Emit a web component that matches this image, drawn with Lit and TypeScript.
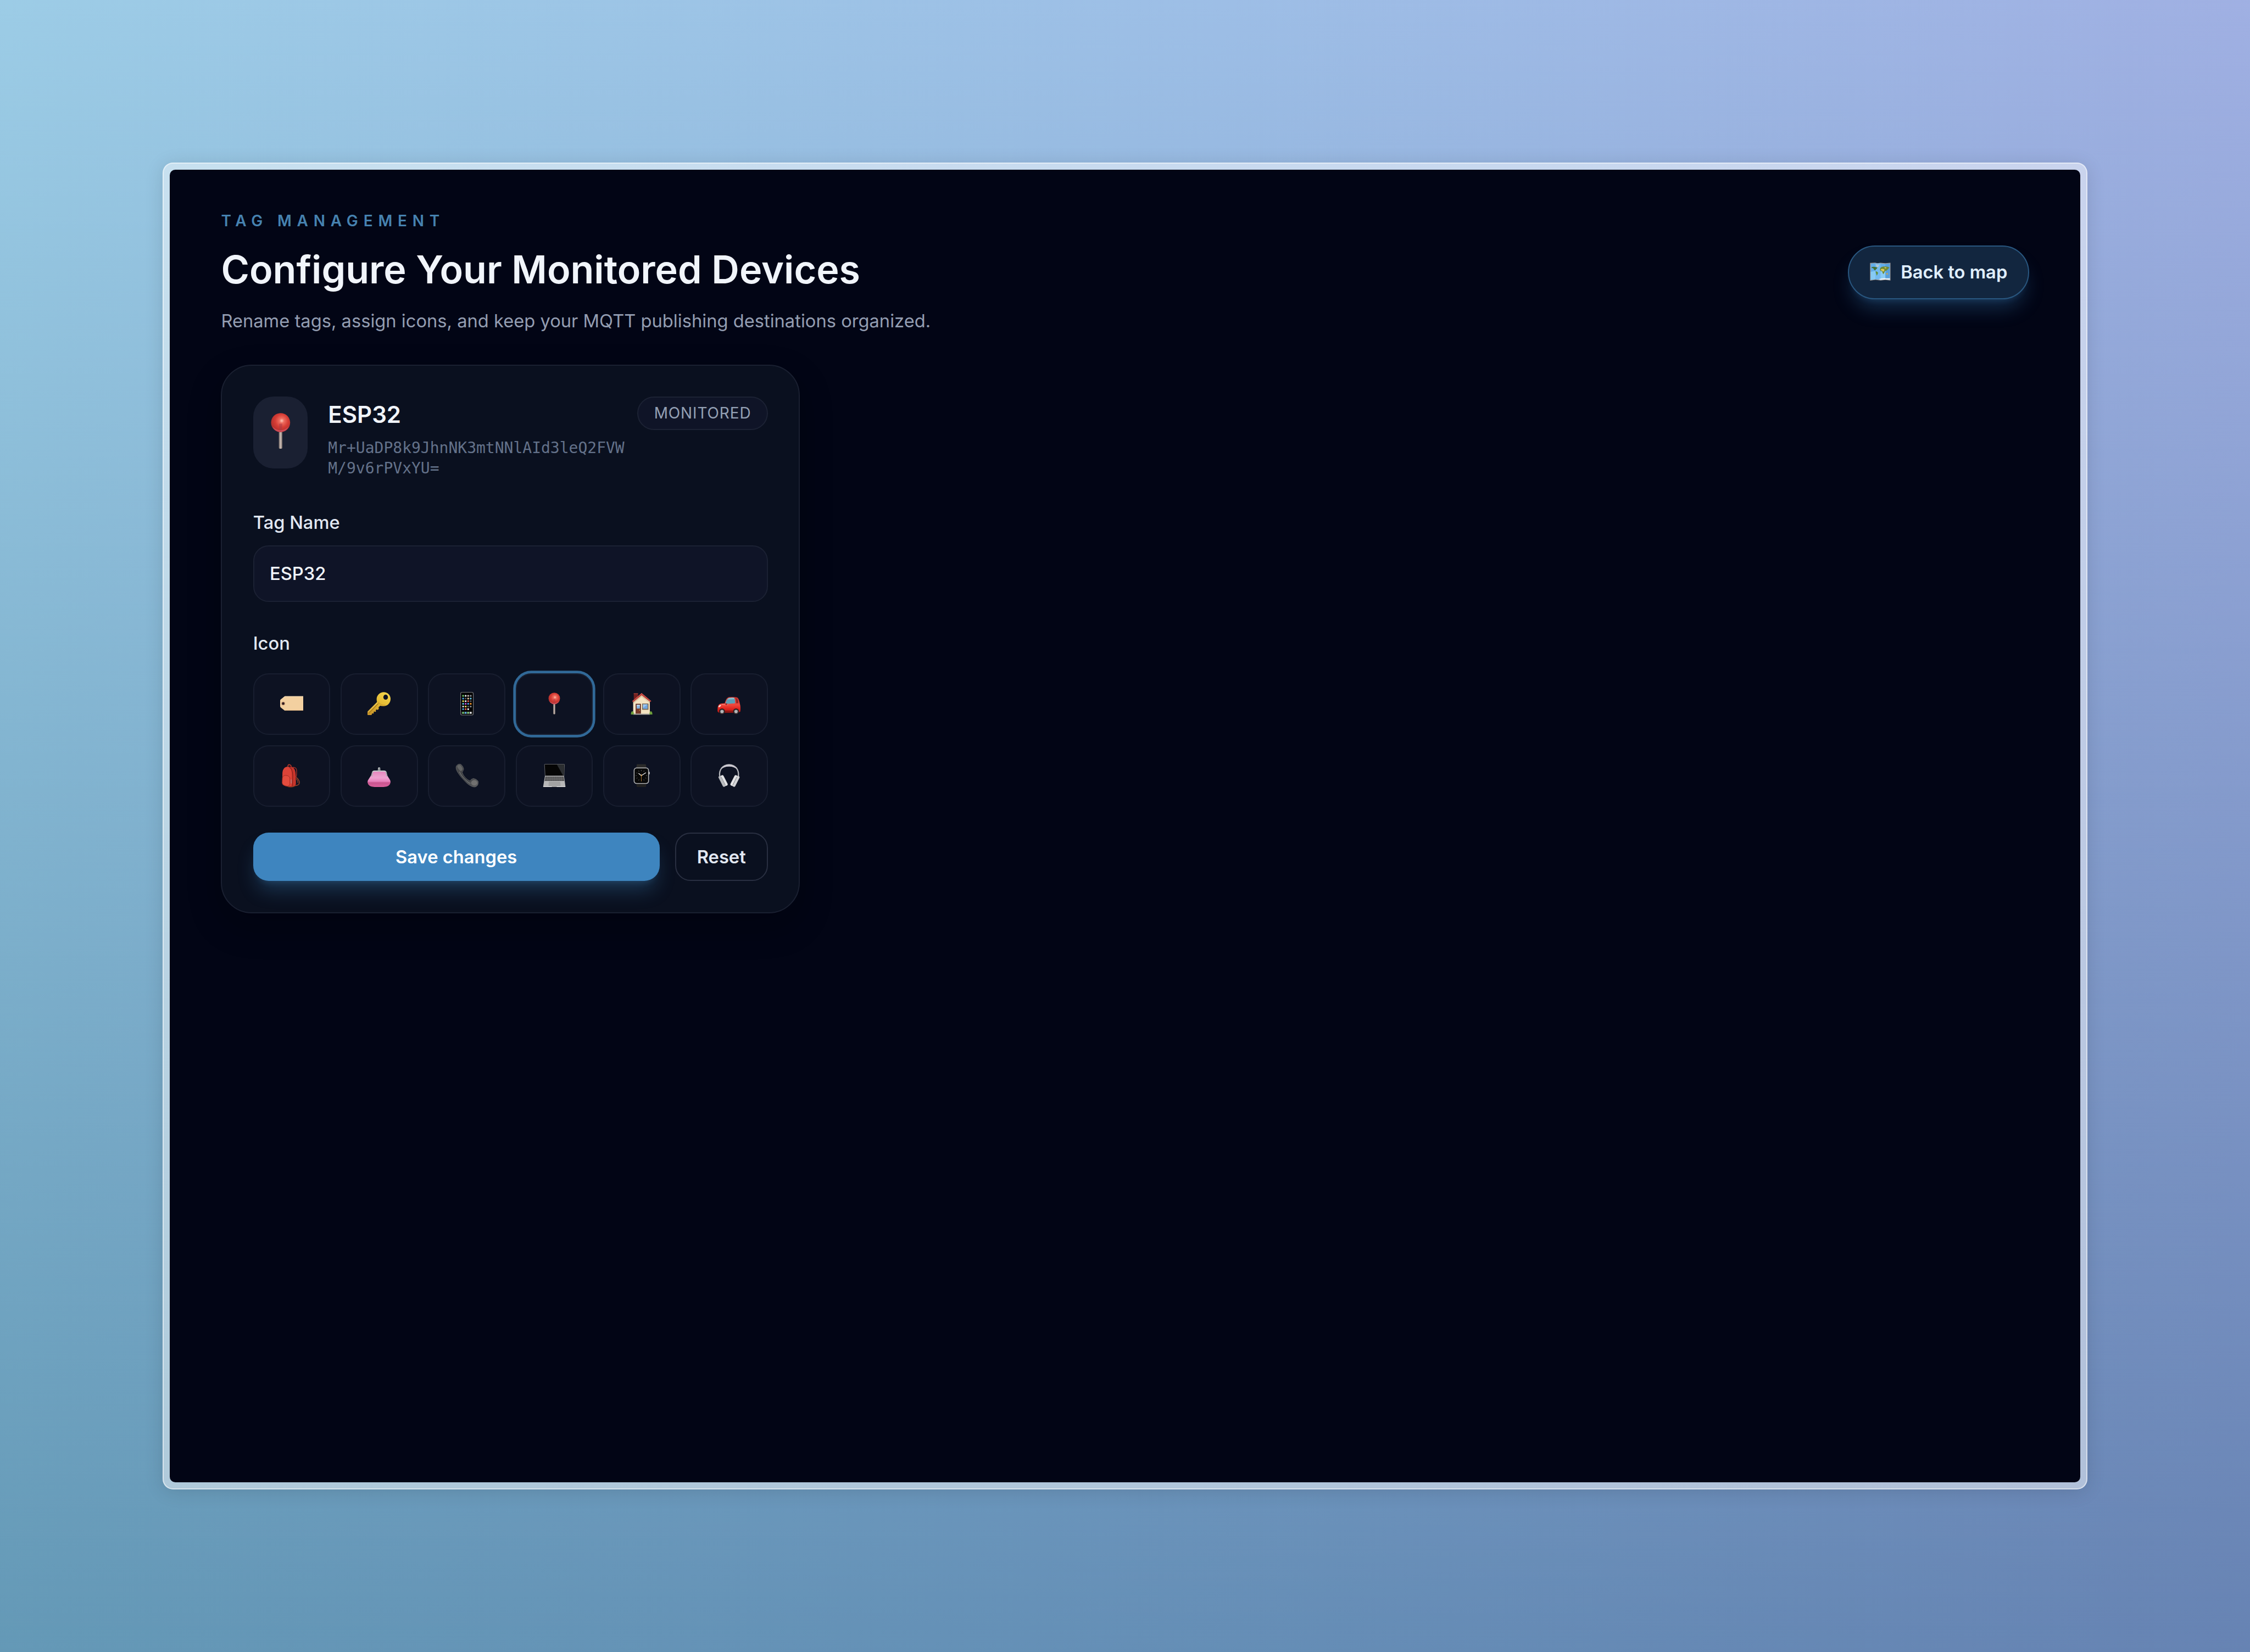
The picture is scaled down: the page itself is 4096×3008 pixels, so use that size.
import { LitElement, html, svg, css, unsafeCSS } from "lit";
import { customElement, property, state } from "lit/decorators.js";
import { classMap } from "lit/directives/class-map.js";

const px = (n: number) => unsafeCSS((n * 2.3345).toFixed(3) + "px");

const pin = svg`
  <defs>
    <radialGradient id="pinHead" cx="0.56" cy="0.4" r="0.62">
      <stop offset="0" stop-color="#ffc9b8"/><stop offset="0.2" stop-color="#ee6c5e"/>
      <stop offset="0.55" stop-color="#d63c35"/><stop offset="1" stop-color="#ab2e2b"/>
    </radialGradient>
    <linearGradient id="pinStem" x1="0" x2="1" y1="0" y2="0">
      <stop offset="0" stop-color="#6d6461"/><stop offset="0.5" stop-color="#d3c3bb"/><stop offset="1" stop-color="#6d6461"/>
    </linearGradient>
  </defs>
  <rect x="23.6" y="25" width="4.8" height="25" rx="1.4" fill="url(#pinStem)"/>
  <ellipse cx="26" cy="14.6" rx="13" ry="13" fill="url(#pinHead)"/>
  <path d="M24 16 L28.4 16 L27.6 26 H24.6 Z" fill="#a53a45" opacity="0.5"/>
  <path d="M15 20 Q18 27 26 27.4 Q34 27 37 20 Q32 25 26 25 Q20 25 15 20Z" fill="#e0607a" opacity="0.55"/>`;

const label = svg`
  <path d="M10.5 9.5 H52 V42 H10.5 L1 34.5 Q0 33.5 0 32 V19.5 Q0 18 1 17Z" fill="#f3d0a0"/>
  <path d="M10.5 9.5 H52 V10.8 H10.8 L1 18 Z" fill="#f9dfb8"/>
  <path d="M10.5 42 H52 V40.9 H11 Z" fill="#c9a274"/>
  <circle cx="6.9" cy="26" r="4.1" fill="#b98e70"/><circle cx="6.9" cy="26" r="2.8" fill="#2c1a1c"/>`;

const key = svg`
  <defs><linearGradient id="keyGold" x1="0.8" y1="0" x2="0.2" y2="1">
    <stop offset="0" stop-color="#f2d34a"/><stop offset="0.5" stop-color="#e3b832"/><stop offset="1" stop-color="#c9952a"/>
  </linearGradient></defs>
  <path d="M36.5 0.3 C45.5 0.3 52 7 52 15.5 C52 25 45 32 36 32 Q31 32 28.5 31 L24.8 34.5 Q26.3 37 24.5 39.3 Q22.5 41 20 39.2 L18.6 41.2 Q20 43.5 17.8 45 L14.8 44 L13.8 46 Q15.2 48 13 48.6 L10.6 48.4 L9 52 H1 Q0 52 0 50.5 V44.8 Q0 44 1 43 L21.5 22.5 Q20.5 19.5 20.6 15.5 C21 7 28 0.3 36.5 0.3Z M40.9 6 A5.2 5.7 0 1 0 40.9 17.4 A5.2 5.7 0 1 0 40.9 6Z" fill="url(#keyGold)" fill-rule="evenodd"/>
  <path d="M3 48 L24.5 26" stroke="#a67a1d" stroke-width="1.6" fill="none"/>
  <path d="M1.4 45 L22.5 24" stroke="#f7de76" stroke-width="1.2" fill="none"/>
  <path d="M24 23 Q30 30.5 40 29.5" stroke="#c4952a" stroke-width="1.4" fill="none" opacity="0.8"/>`;

const phoneDots: [number, string][] = [
  [0, "#6fce6a"], [1, "#e9e9ee"], [2, "#c9b5ae"], [3, "#8d9096"],
  [4, "#4aa8e6"], [5, "#55585c"], [6, "#e5c3a0"], [7, "#69c9e9"],
  [8, "#e6dc5b"], [9, "#f1f1f1"], [10, "#e05a54"], [11, "#5b5b60"],
  [12, "#57cbe0"], [13, "#c94fdc"], [14, "#4d9fe8"], [15, "#ec9331"],
  [16, "#d9d9dc"], [17, "#e7d957"], [18, "#54565a"], [19, "#85898f"],
  [20, "#49a6e8"], [21, "#e4574e"], [22, "#eeeeee"],
];
const mobile = svg`
  <rect x="11.8" y="0.6" width="28.6" height="51.4" rx="3.4" fill="#050505" stroke="#77787c" stroke-width="1.4"/>
  <rect x="14.2" y="5" width="24" height="44.5" fill="#000"/>
  ${phoneDots.map(([i, c]) => svg`<rect x=${15.6 + (i % 4) * 5.7} y=${6.9 + Math.floor(i / 4) * 6} width="3.7" height="3.7" rx="0.8" fill=${c}/>`)}
  <rect x="14" y="44.3" width="24.2" height="5.2" rx="0.6" fill="#4a4d52" opacity="0.7"/>
  ${["#6fd06a", "#58b4ec", "#7fd67a", "#f3f3f3"].map((c, i) => svg`<rect x=${15.5 + i * 5.7} y="44.9" width="3.8" height="4" rx="0.8" fill=${c}/>`)}`;

const house = svg`
  <rect x="8.3" y="2.8" width="9.6" height="14" fill="#74201f"/><rect x="8.3" y="2.8" width="9.6" height="2.2" fill="#8f3733"/>
  <path d="M7 21 L26 5 L44.6 21 V50 H7Z" fill="#f3e3c2"/>
  <path d="M26 8 L44.6 23 V25 L26 11 L7 26 V23Z" fill="#c9ae86" opacity="0.6"/>
  <path d="M26 2.6 L47.6 20.4 L45.6 22.6 L26 7.4 L7 23 L4.8 20.6Z" fill="#b83a35"/>
  <path d="M26 2.6 L47.6 20.4 L46.8 21.2 L26 4.4 L5.6 21.4 L4.8 20.6Z" fill="#d25a50"/>
  <rect x="12.6" y="26.6" width="11.8" height="22.6" fill="#5a2a1f"/><rect x="14" y="28" width="9" height="21" fill="#7b3b2a"/>
  <rect x="14.8" y="29" width="7.4" height="8.4" fill="#7fb1de"/><rect x="14.8" y="29" width="7.4" height="3" fill="#bcd7ef"/>
  <circle cx="21.4" cy="41" r="1" fill="#e0b74e"/>
  <rect x="27.2" y="26" width="14.2" height="14" fill="#76634d"/><rect x="29" y="27.8" width="10.6" height="10.2" fill="#6fa6e0"/>
  <path d="M29 27.8 H39.6 L29 36Z" fill="#9cc6ee"/>
  <rect x="7" y="48.8" width="37.6" height="2.4" fill="#a9a7a4"/>
  <path d="M2 50.8 Q1.6 44 5.4 43.4 Q8.6 44.2 8.6 50.8Z" fill="#6f9f3c"/>
  <path d="M43.6 50.8 Q43.4 43.6 47 43.4 Q50.6 44.4 50.2 50.8Z" fill="#6f9f3c"/>`;

const car = svg`
  <defs><linearGradient id="carBody" x1="0" y1="0" x2="0" y2="1">
    <stop offset="0" stop-color="#c5302b"/><stop offset="0.5" stop-color="#f0483d"/><stop offset="0.75" stop-color="#e0261f"/><stop offset="1" stop-color="#a81a18"/>
  </linearGradient></defs>
  <path d="M0.6 36 Q1 27 9 26 L16.6 25.4 Q20 12.4 26 11.4 Q35 10.4 43.6 12 Q47.6 13 49.6 22 L51.6 31 Q52.4 38 51.6 44.4 L47 46.4 H3 Q0 46 0.2 42Z" fill="url(#carBody)"/>
  <path d="M18.4 25.8 Q21 15.4 25.8 13.4 Q33 12.2 38 13 Q40 18 39.8 25 Q28 27.4 18.4 25.8Z" fill="#8cc3d2"/>
  <path d="M18.4 25.8 Q19.6 20 22.2 16.6 L38.8 16 Q40 20 39.8 25 Q28 27.4 18.4 25.8Z" fill="#5b9fb6"/>
  <path d="M43 14.6 Q46.4 17 47 25 L42.4 25.4 Q42.8 20 41.4 13.8Z" fill="#8f2423"/>
  <path d="M2.4 33 Q4 28.4 8.6 29 Q7 33.8 3 34.4Z" fill="#f6e6e0"/>
  <path d="M10 27.6 Q18 29.6 24 28.4" stroke="#ff9186" stroke-width="1.3" fill="none"/>
  <ellipse cx="20" cy="27.6" rx="2.3" ry="1.8" fill="#a01e1c"/>
  <path d="M17 42 H35.6 V46.6 H17Z" fill="#8f1512"/>
  <circle cx="10.4" cy="43.6" r="6.6" fill="#2a1616"/><circle cx="10.4" cy="44" r="4.8" fill="#66686c"/><circle cx="10.4" cy="44" r="3" fill="#d9dadc"/><circle cx="10.4" cy="44" r="1" fill="#555"/>
  <circle cx="42" cy="43.6" r="6.6" fill="#2a1616"/><circle cx="42" cy="44" r="4.8" fill="#66686c"/><circle cx="42" cy="44" r="3" fill="#d9dadc"/><circle cx="42" cy="44" r="1" fill="#555"/>`;

const backpack = svg`
  <path d="M17 6 Q18 1 21 1.6 Q24.6 2.4 25.6 7" stroke="#a63329" stroke-width="2.2" fill="none"/>
  <path d="M27 8 Q36.4 6.6 37 14 Q37.6 24 35.8 30" stroke="#9c2f27" stroke-width="1.8" fill="none"/>
  <path d="M36 30 Q45 38 43 44 Q41.4 48.6 33 49" stroke="#8d3a26" stroke-width="2.2" fill="none"/>
  <path d="M36 33 Q41 39 40 43" stroke="#b5532f" stroke-width="1.2" fill="none"/>
  <path d="M5.4 20 Q6 7.6 15.6 6.4 Q24 5.4 29.6 8.4 Q34.4 12 35 24 L35.6 44 Q35 51 27 52 Q20 52.4 16 50.8 Q4.4 48.6 4.6 43Z" fill="#c9352b"/>
  <path d="M5.4 20 Q6 7.6 15.6 6.4 Q25 7 25.8 22 L26.4 43 Q26 50.6 19.6 51.4 Q4.6 49.6 4.6 43Z" fill="#dc4338"/>
  <path d="M20 7 Q28.6 10 28.4 26 L28 50" stroke="#7d1f1b" stroke-width="1.3" fill="none"/>
  <path d="M5 31 Q7 25.4 13 25.8 Q21 26.6 22 32 L22 45 Q21.4 50 17 50.4 Q5 48.6 4.7 43Z" fill="#e34c3e" stroke="#9c2720" stroke-width="1.1"/>
  <path d="M24.8 35 V44" stroke="#9aa0a8" stroke-width="1.2"/><path d="M17 51 Q26 53.4 33 50" stroke="#7c3a22" stroke-width="1.8" fill="none"/>`;

const purse = svg`
  <defs><linearGradient id="purseSkin" x1="0" y1="0" x2="0" y2="1">
    <stop offset="0" stop-color="#e487bd"/><stop offset="0.4" stop-color="#eea3d0"/><stop offset="0.64" stop-color="#e880bb"/><stop offset="0.72" stop-color="#c9558f"/><stop offset="1" stop-color="#d9609c"/>
  </linearGradient></defs>
  <path d="M11 17 H42 Q43.6 26 49 33 Q52 37 52 41 Q51 51 36 52 H16 Q1 51 0 41 Q0 37 3.4 33 Q9 26 11 17Z" fill="url(#purseSkin)"/>
  <path d="M9.6 28 L11.2 18.6 Q12 16.4 15 16.2 H38 Q41.2 16.4 42 18.6 L43.6 28" stroke="#a9adb0" stroke-width="2.4" fill="none"/>
  <path d="M12 17.6 Q13 16 16 16 H37 Q40 16 41 17.6" stroke="#dfe2e3" stroke-width="1.4" fill="none"/>
  <path d="M22.4 15.4 Q24 13 23.4 10.6 Q24.4 7.4 26.4 7.4 Q29.4 7.6 29 11 Q28.4 13.6 30.4 15.4Z" fill="#8e9396"/>
  <circle cx="25.4" cy="9.2" r="1.3" fill="#e3e6e7"/>`;

const receiver = svg`
  <defs><linearGradient id="receiverSkin" x1="0" y1="0" x2="1" y2="1">
    <stop offset="0" stop-color="#4d4e50"/><stop offset="0.5" stop-color="#3a3c3f"/><stop offset="1" stop-color="#5d5e60"/>
  </linearGradient></defs>
  <path d="M5 1.6 Q9 -0.8 12.6 1 Q17.6 5.4 18.8 11.6 Q17.6 15.4 15.4 19 Q17 25 22.6 31 Q28 36.6 33 38 Q35.6 33.6 40.6 32.6 Q46.6 33.6 51 38.4 Q52.4 42 50.6 47 Q47.4 52.6 41.6 52 Q31 50 19.6 37 Q9.6 27 4.4 17.6 Q-2 6.6 5 1.6Z" fill="url(#receiverSkin)" stroke="#66686b" stroke-width="0.8"/>
  <path d="M4 5.6 Q7 13 12.6 16.6 Q16.4 14 16.4 11 Q13 3 9.4 2.2 Q5.6 2 4 5.6Z" fill="#6a6b6c" opacity="0.8"/>
  <path d="M9 17.4 Q14 29 26 39 Q31 43.6 34 43.6" stroke="#7b7d80" stroke-width="1.7" fill="none" opacity="0.75"/>
  <ellipse cx="42.4" cy="42.6" rx="7" ry="6" fill="#7c7b7a" opacity="0.75"/>`;

const laptop = svg`
  <path d="M4.6 0.6 H48.4 Q49 0.6 49 1.4 L48 27 H5.4 L4 1.4 Q4 0.6 4.6 0.6Z" fill="#050505" stroke="#77797b" stroke-width="1"/>
  <path d="M32 1.4 H48.2 L47.6 26 H45.6Z" fill="#2c2f32"/>
  <path d="M5 27 H48 L51.2 50.6 Q51.2 52 50 52 H2 Q0.8 52 1 50.6Z" fill="#b7b7b7"/>
  <path d="M6 28.6 H47.2 L48.6 38.4 H4.4Z" fill="#4b4b4c"/>
  <path d="M5.8 31 H47.8 M5.4 33.4 H48 M5 35.8 H48.4" stroke="#8f8f90" stroke-width="0.6"/>
  ${[10, 14, 18, 22, 26, 30, 34, 38, 42].map((x) => svg`<path d="M${x + 0.6} 28.6 L${x} 38.4" stroke="#8a8a8b" stroke-width="0.5"/>`)}
  <path d="M14.4 40.4 H38.6 L39.6 49.4 H13.6Z" fill="#a2a2a2" stroke="#8f8f8f" stroke-width="0.5"/>
  <path d="M1 50.4 H51.2 L50.6 52 H1.6Z" fill="#dedede"/><path d="M20 50.6 H32 L31 52 H21Z" fill="#8d8d8d"/>`;

const watch = svg`
  <path d="M15.4 0.6 H35.4 L37 9 H13.8Z" fill="#2a2a2a"/><path d="M13.8 44 H37 L35.4 52 H15.4Z" fill="#202020"/>
  <rect x="42" y="17.6" width="2.4" height="6" rx="1" fill="#bfc0c2"/>
  <rect x="8.2" y="8" width="34.4" height="37" rx="6.4" fill="#b5b6b8"/><rect x="10" y="9.8" width="30.8" height="33.4" rx="5" fill="#1d1e20"/>
  <rect x="10.8" y="10.6" width="29" height="31.6" rx="4.2" fill="#080808"/>
  ${[0, 30, 60, 90, 120, 150, 180, 210, 240, 270, 300, 330].map((a) => svg`<path d="M25.4 13.6 V15.8" stroke="#77787c" stroke-width="1" transform="rotate(${a} 25.4 26.2)"/>`)}
  <path d="M25.4 26.4 L19.4 21.4 M25.4 26.4 L35 20" stroke="#f2f2f2" stroke-width="1.5" stroke-linecap="round"/>
  <path d="M25.4 23 V39" stroke="#c98b35" stroke-width="1"/><circle cx="25.4" cy="26.4" r="1.3" fill="#d99a45"/>`;

const headphones = svg`
  <path d="M5.2 27 Q3.6 17 9.4 9.4 Q16 1.6 26.2 1.6 Q36.4 1.6 43 9.4 Q48.6 17 47.2 27" stroke="#b4b5ba" stroke-width="2.8" fill="none"/>
  <path d="M7.6 13 Q14 1.4 26.2 1.4 Q38.4 1.4 44.8 13 Q38.6 6 26.2 6 Q13.8 6 7.6 13Z" fill="#cdcad3"/>
  <g transform="rotate(-27 12.6 38.4)"><rect x="7" y="24.6" width="7" height="27" rx="3.4" fill="#b9bbbf"/><rect x="12" y="25.6" width="7" height="26" rx="3.4" fill="#e4e4e6"/><path d="M13 28 V49" stroke="#77797d" stroke-width="1.1"/></g>
  <g transform="rotate(27 39.8 38.4)"><rect x="38.4" y="24.6" width="7" height="27" rx="3.4" fill="#d3d4d7"/><rect x="33.4" y="25.6" width="7" height="26" rx="3.4" fill="#e4e4e6"/><path d="M39.4 28 V49" stroke="#77797d" stroke-width="1.1"/></g>`;

const icons = { label, key, mobile, pin, house, car, backpack, purse, receiver, laptop, watch, headphones };
type IconName = keyof typeof icons;

@customElement("tag-icon")
class TagIcon extends LitElement {
  @property() name: IconName = "pin";
  static styles = css`
    :host { display: block; }
    svg { display: block; width: 100%; height: 100%; overflow: visible; }
  `;
  render() {
    return html`<svg viewBox="0 0 52 52" aria-hidden="true">${icons[this.name]}</svg>`;
  }
}

@customElement("map-icon")
class MapIcon extends LitElement {
  static styles = css`
    :host { display: block; }
    svg { display: block; width: 100%; height: 100%; }
  `;
  render() {
    return html`<svg viewBox="0 0 47 41" aria-hidden="true">
      <path d="M0.4 0.8 L12 0.2 L17 1.6 L24 0.4 L35 1.6 L46.6 0.4 V40.6 L35 39.4 L24 40.6 L12.6 39.2 L0.4 40.8Z" fill="#a8968a"/>
      <path d="M1.8 2.2 L12 1.5 L17 3 L24 1.8 L35 3 L45.2 1.8 V39.2 L35 38 L24 39.2 L12.6 37.8 L1.8 39.4Z" fill="#62ade9"/>
      <path d="M1.8 21 L12.6 19 V37.8 L1.8 39.4Z" fill="#87cbf4"/><path d="M24 1.8 L12.6 2.2 V37.8 L24 39.2Z" fill="#74baf0"/>
      <path d="M35 3 L45.2 1.8 V39.2 L35 38Z" fill="#579fdc"/><path d="M24 20 L35 19 V38 L24 39.2Z" fill="#8accf5"/>
      <path d="M13 3.6 Q17 6.4 21.4 4.6 Q20.6 9 17.4 11 Q14 9 13 3.6Z" fill="#b9c5cc"/>
      <path d="M4 10.6 Q7 9 12 10 L17.4 11.4 Q15.6 14 13.4 15.8 Q13 18 10.8 17.4 Q8.4 16 8 13.4 Q6 12 4 12.6Z" fill="#457236"/>
      <path d="M13 19.4 Q16.6 20 18.6 23 Q17.8 27 15.6 29.6 Q14.6 26 13.6 23.6Z" fill="#638f38"/>
      <path d="M23.6 12 Q27 8 34 9 Q40 8.6 44.4 11.4 Q42 13 40.4 15.4 Q37 20 34.6 18.2 Q33.4 22 30.6 26.4 Q28.4 24 27.8 19.4 Q24 19.6 22.8 17 Q22.6 14 23.6 12Z" fill="#6f8a34"/>
      <path d="M25 15 Q29 13.4 33 15.6 Q33 19 30.4 20.6 Q28 18 25 17.6Z" fill="#e0cb5a"/>
      <path d="M33 10.4 Q36 10 38 12 Q36 14 33.6 13Z" fill="#d9c45a"/>
      <path d="M36.8 24 Q39.4 23 41.6 25.4 Q40.6 28.4 37.4 27Z" fill="#c9a850"/>
      <path d="M20 37.4 Q26 35 34 35.4 Q40 36 45.2 35.4 V39.2 L35 38 L24 39.2Z" fill="#eaf3f8"/>
    </svg>`;
  }
}

@customElement("app-root")
class AppRoot extends LitElement {
  @state() selected: IconName = "pin";

  static styles = css`
    :host {
      display: flex;
      box-sizing: border-box;
      width: 4096px;
      height: 3008px;
      padding: 296px;
      font-family: Inter, "Liberation Sans", sans-serif;
      background:
        linear-gradient(to bottom, #fff, rgb(163, 193, 202)),
        linear-gradient(97deg, #9ccce6, #9dbee6 50%, #a0ade2);
      background-blend-mode: multiply;
    }
    * { box-sizing: border-box; }
    h1, h2, p { margin: 0; }
    button, input { font-family: inherit; margin: 0; }

    .frame {
      flex: 1;
      display: flex;
      padding: 11px;
      border: 2px solid rgba(255, 255, 255, 0.5);
      border-radius: 19px;
      background: rgba(255, 255, 255, 0.47);
      box-shadow: 0 4px 34px rgba(0, 0, 0, 0.12);
    }
    .page {
      flex: 1;
      border-radius: 10px;
      overflow: hidden;
      padding: ${px(32)} ${px(40)};
      background: #020515;
      display: flex;
      flex-direction: column;
      align-items: stretch;
      gap: ${px(24)};
    }
    .header { display: flex; align-items: center; justify-content: space-between; height: ${px(96)}; }
    .heading { display: flex; flex-direction: column; gap: ${px(12)}; }
    .eyebrow { font-size: ${px(12)}; line-height: ${px(16)}; font-weight: 600; letter-spacing: 0.35em; color: #4682b0; }
    .title { font-size: ${px(30)}; line-height: ${px(36)}; font-weight: 600; color: #f1f5fb; white-space: nowrap; }
    .lead { font-size: ${px(14)}; line-height: ${px(20)}; color: #939db1; white-space: nowrap; }

    .back {
      display: flex; align-items: center; gap: ${px(8)};
      height: ${px(42)}; padding: 0 ${px(16)};
      border: ${px(1)} solid #295780; border-radius: 999px;
      background: #12263f; color: #e0efff;
      font-size: ${px(14)}; line-height: ${px(20)}; font-weight: 600; white-space: nowrap;
      box-shadow: 0 ${px(10)} ${px(15)} ${px(-3)} rgba(60, 132, 192, 0.3), 0 ${px(4)} ${px(6)} ${px(-4)} rgba(60, 132, 192, 0.3);
    }
    .back-icon { width: ${px(16.2)}; height: ${px(14.2)}; margin-bottom: ${px(1)}; }

    .card {
      width: ${px(451.4)}; height: ${px(428.1)};
      padding: ${px(24.1)} ${px(24.14)};
      border: ${px(1)} solid #1a2031; border-radius: ${px(24)};
      background: #0a101f;
      box-shadow: 0 ${px(10)} ${px(25)} rgba(0, 0, 8, 0.3);
    }
    .identity { display: flex; align-items: flex-start; height: ${px(64)}; }
    .avatar {
      width: ${px(42.5)}; height: ${px(56)}; margin-right: ${px(16)};
      display: flex; align-items: center; justify-content: center;
      border-radius: ${px(16)}; background: #1a2032;
    }
    .avatar-icon { width: ${px(29.8)}; height: ${px(29.8)}; margin-bottom: ${px(2)}; flex: none; }
    .names { flex: 1; display: flex; flex-direction: column; gap: ${px(4)}; min-width: 0; }
    .name { font-size: ${px(18)}; line-height: ${px(28)}; font-weight: 600; color: #f1f5fb; }
    .hash {
      width: ${px(235)};
      font-family: "DejaVu Sans Mono", monospace;
      font-size: ${px(12)}; line-height: ${px(16)}; color: #64728a; word-break: break-all;
    }
    .status {
      height: ${px(26.1)}; padding: 0 ${px(12.14)};
      border: ${px(1)} solid #1c2234; border-radius: 999px; background: #0f1427;
      font-size: ${px(12)}; line-height: ${px(24)}; font-weight: 400; letter-spacing: 0.031em; color: #94a0b4;
    }
    .caption { display: block; font-size: ${px(14)}; line-height: ${px(20)}; font-weight: 500; color: #e2e8f2; }
    .name-caption { margin-top: ${px(24)}; }
    .icon-caption { margin-top: ${px(22.3)}; }
    .field {
      display: block; width: 100%; height: ${px(44.1)}; margin-top: ${px(8)}; padding: 0 ${px(12.14)};
      border: ${px(1)} solid #1b2133; border-radius: ${px(12)}; background: #0f1427; outline: none;
      font-size: ${px(14)}; font-weight: 500; color: #f1f5fb;
    }
    .choices {
      display: grid; grid-template-columns: repeat(6, 1fr); grid-auto-rows: ${px(48.1)}; gap: ${px(8)};
      margin-top: ${px(13.5)};
    }
    .choice {
      display: flex; align-items: center; justify-content: center; padding: 0;
      border: ${px(1)} solid #181e2f; border-radius: ${px(12)}; background: #0d1222;
    }
    .choice.selected { box-shadow: 0 0 0 ${px(2)} #316998; }
    .choice-icon { width: ${px(18)}; height: ${px(18)}; margin-bottom: ${px(1.2)}; }
    .actions { display: flex; gap: ${px(12)}; margin-top: ${px(19.9)}; }
    .action {
      height: ${px(38)}; padding: 0; border-radius: ${px(12)};
      font-size: ${px(14)}; line-height: ${px(20)}; font-weight: 600;
    }
    .save {
      flex: 1; border: none; background: #3e85bf; color: #fff;
      box-shadow: 0 ${px(10)} ${px(15)} ${px(-3)} rgba(62, 133, 191, 0.32), 0 ${px(4)} ${px(6)} ${px(-4)} rgba(62, 133, 191, 0.32);
    }
    .reset { width: ${px(72.5)}; border: ${px(1)} solid #292f41; background: transparent; color: #e2e8f2; }
  `;

  render() {
    return html`
      <div class="frame">
        <main class="page">
          <header class="header">
            <div class="heading">
              <p class="eyebrow">TAG MANAGEMENT</p>
              <h1 class="title">Configure Your Monitored Devices</h1>
              <p class="lead">Rename tags, assign icons, and keep your MQTT publishing destinations organized.</p>
            </div>
            <button class="back"><map-icon class="back-icon"></map-icon><span>Back to map</span></button>
          </header>
          <section class="card">
            <div class="identity">
              <div class="avatar"><tag-icon class="avatar-icon" .name=${this.selected}></tag-icon></div>
              <div class="names">
                <h2 class="name">ESP32</h2>
                <p class="hash">Mr+UaDP8k9JhnNK3mtNNlAId3leQ2FVWM/9v6rPVxYU=</p>
              </div>
              <span class="status">MONITORED</span>
            </div>
            <label class="caption name-caption" for="name">Tag Name</label>
            <input class="field" id="name" .value=${"ESP32"} />
            <span class="caption icon-caption">Icon</span>
            <div class="choices">
              ${(Object.keys(icons) as IconName[]).map(
                (name) => html`<button
                  class=${classMap({ choice: true, selected: name === this.selected })}
                  @click=${() => (this.selected = name)}
                ><tag-icon class="choice-icon" .name=${name}></tag-icon></button>`
              )}
            </div>
            <div class="actions">
              <button class="action save">Save changes</button>
              <button class="action reset">Reset</button>
            </div>
          </section>
        </main>
      </div>
    `;
  }
}
